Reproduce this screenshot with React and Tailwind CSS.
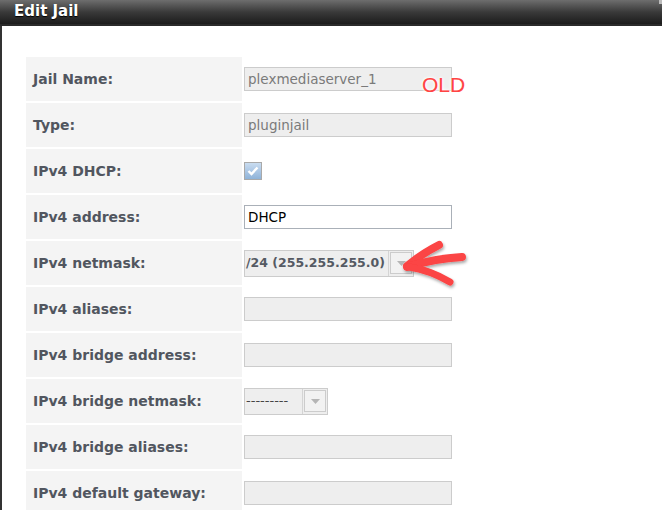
import React from "react";

const rows = [
  { label: "Jail Name:", kind: "ro", value: "plexmediaserver_1" },
  { label: "Type:", kind: "ro", value: "pluginjail" },
  { label: "IPv4 DHCP:", kind: "check" },
  { label: "IPv4 address:", kind: "text", value: "DHCP" },
  { label: "IPv4 netmask:", kind: "select", value: "/24 (255.255.255.0)", wide: true },
  { label: "IPv4 aliases:", kind: "ro", value: "" },
  { label: "IPv4 bridge address:", kind: "ro", value: "" },
  { label: "IPv4 bridge netmask:", kind: "select", value: "---------" },
  { label: "IPv4 bridge aliases:", kind: "ro", value: "" },
  { label: "IPv4 default gateway:", kind: "ro", value: "" },
];

function Select({ value, wide }) {
  return (
    <div
      className={`flex h-[27px] items-stretch border border-[#cccccc] bg-[#eeeeee] ${
        wide ? "w-[170px]" : "w-[84px]"
      }`}
    >
      <div
        className={`flex flex-1 items-center pl-[1px] ${
          wide ? "font-bold text-[12.5px] text-[#555a63]" : "text-[13px] text-[#444]"
        }`}
      >
        {value}
      </div>
      <div className="flex items-center border-l border-[#d4d4d4] py-[1px] pl-[1px] pr-[1px]">
        <div className="flex h-[22px] w-[22px] items-center justify-center border border-[#cccccc] bg-[#f2f2f2]">
          <svg width="9" height="5" viewBox="0 0 9 5">
            <path d="M0 0 H9 L4.5 5 Z" fill="#b5b5b5" />
          </svg>
        </div>
      </div>
    </div>
  );
}

function Field({ row }) {
  if (row.kind === "check") {
    return (
      <div className="flex h-[18px] w-[18px] items-center justify-center border border-[#a9a9a9] bg-gradient-to-b from-[#c9dcf0] to-[#8fb3d9]">
        <svg width="12" height="10" viewBox="0 0 12 10">
          <path
            d="M1.5 5 L4.5 8 L10.5 1.5"
            fill="none"
            stroke="#ffffff"
            strokeWidth="2.4"
          />
        </svg>
      </div>
    );
  }
  if (row.kind === "select") return <Select value={row.value} wide={row.wide} />;
  if (row.kind === "text") {
    return (
      <div className="flex h-[24px] w-[208px] items-center border border-[#aab0b8] bg-white pl-[3px] text-[13.5px] text-black">
        {row.value}
      </div>
    );
  }
  return (
    <div className="flex h-[24px] w-[208px] items-center border border-[#cccccc] bg-[#eeeeee] pl-[3px] text-[13.5px] text-[#7a7a7a]">
      {row.value}
    </div>
  );
}

export default function App() {
  return (
    <div
      className="relative h-[510px] w-[662px] overflow-hidden bg-white"
      style={{ fontFamily: '"DejaVu Sans", Verdana, sans-serif' }}
    >
      {/* title bar */}
      <div className="flex h-[26px] items-start border-b-2 border-[#2a2a2a] bg-gradient-to-b from-[#6e6e6e] via-[#3a3a3a] to-[#1c1c1c] pl-[14px]">
        <span className="mt-[1px] text-[15px] font-bold leading-[20px] text-white [text-shadow:0_1px_1px_#000]">
          Edit Jail
        </span>
        <div className="ml-auto mt-0 h-[4px] w-[3px] bg-[#bbbbbb]" />
      </div>

      <div className="h-[484px] border-l-2 border-[#333333] pl-[24px] pt-[31px]">
        <div className="flex flex-col gap-[2px]">
          {rows.map((row) => (
            <div key={row.label} className="flex h-[44px] gap-[2px]">
              <div className="flex w-[216px] shrink-0 items-center bg-[#f4f4f4] pl-[7px] text-[14px] font-bold text-[#51565f]">
                {row.label}
              </div>
              <div className="flex items-center">
                <Field row={row} />
              </div>
            </div>
          ))}
        </div>
      </div>

      {/* annotation: OLD */}
      <div
        className="absolute left-[422px] top-[72px] text-[21px] leading-[26px] text-[#ff4444] [text-shadow:0_0_2px_#fff,0_0_3px_#fff,0_0_4px_#fff,0_0_0.5px_#ff4444]"
        style={{ fontFamily: '"Liberation Sans", Arial, sans-serif' }}
      >
        OLD
      </div>

      {/* annotation: arrow */}
      <svg
        className="absolute left-[398px] top-[236px]"
        width="78"
        height="56"
        viewBox="0 0 78 56"
      >
        <defs>
          <filter id="sh" x="-20%" y="-20%" width="140%" height="150%">
            <feDropShadow dx="1" dy="2" stdDeviation="1.5" floodColor="#000" floodOpacity="0.35" />
          </filter>
        </defs>
        <g filter="url(#sh)" fill="none" stroke="#fb4444" strokeLinecap="round" strokeLinejoin="round">
          <path d="M9 30 C20 21 31 14 41 9" strokeWidth="8" />
          <path d="M9 31 C25 26 45 22 64 21" strokeWidth="8" />
          <path d="M11 31 C25 33 40 39 52 46" strokeWidth="7" />
        </g>
      </svg>
    </div>
  );
}
